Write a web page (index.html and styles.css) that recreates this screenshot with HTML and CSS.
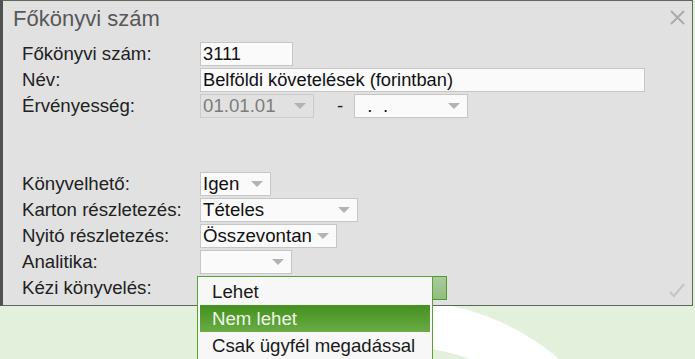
FILE: index.html
```html
<!DOCTYPE html>
<html lang="hu">
<head>
    <meta charset="UTF-8">
    <meta name="viewport" content="width=device-width, initial-scale=1.0">
    <title>Főkönyvi szám</title>
    <link rel="stylesheet" href="styles.css">
</head>
<body>
    <div class="dialog">
        <h1 class="dialog-title">Főkönyvi szám</h1>
        <button class="close-btn" title="Bezár">
            <svg width="15" height="15" viewBox="0 0 15 15"><path d="M1 1 L14 14 M14 1 L1 14" stroke="#ababab" stroke-width="2" fill="none"/></svg>
        </button>

        <form class="form-grid">
            <label>Főkönyvi szám:</label>
            <div><input class="field w-code" type="text" value="3111"></div>

            <label>Név:</label>
            <div><input class="field w-name" type="text" value="Belföldi követelések (forintban)"></div>

            <label>Érvényesség:</label>
            <div class="date-range">
                <div class="select w-date disabled"><span>01.01.01</span><i class="arrow"></i></div>
                <span class="dash">-</span>
                <div class="select w-date"><span>&nbsp;&nbsp;.&nbsp;&nbsp;.</span><i class="arrow"></i></div>
            </div>

            <div class="spacer"></div>

            <label>Könyvelhető:</label>
            <div><div class="select w-igen"><span>Igen</span><i class="arrow"></i></div></div>

            <label>Karton részletezés:</label>
            <div><div class="select w-karton"><span>Tételes</span><i class="arrow"></i></div></div>

            <label>Nyitó részletezés:</label>
            <div><div class="select w-nyito"><span>Összevontan</span><i class="arrow"></i></div></div>

            <label>Analitika:</label>
            <div><div class="select w-anal"><span></span><i class="arrow"></i></div></div>

            <label>Kézi könyvelés:</label>
            <div>
                <div class="select w-kezi open">
                    <span></span>
                    <ul class="dropdown">
                        <li>Lehet</li>
                        <li class="active">Nem lehet</li>
                        <li>Csak ügyfél megadással</li>
                    </ul>
                </div>
            </div>
        </form>

        <span class="ok-mark">
            <svg width="17" height="16" viewBox="0 0 17 16"><path d="M2 10 L6 14 L16 2" stroke="#c4c4c4" stroke-width="2" fill="none"/></svg>
        </span>
    </div>
</body>
</html>
```

FILE: styles.css
```css
html, body {
    margin: 0;
    padding: 0;
}

body {
    min-height: 100vh;
    font-family: 'Liberation Sans', Arial, sans-serif;
    color: #222;
    background:
        radial-gradient(circle at 400px 546px, transparent 199px, #ffffff 200px, #ffffff 245px, transparent 246px),
        #e3f0dc;
}

.dialog {
    position: relative;
    width: 689px;
    background-color: #e1e1e1;
    border: 1px solid #5d6659;
    border-left: 3px solid #505050;
    padding: 5px 0 5px 0;
}

.dialog-title {
    margin: 0 0 10px 10px;
    font-size: 22px;
    font-weight: normal;
    line-height: 26px;
    color: #585858;
}

.close-btn {
    position: absolute;
    top: 9px;
    right: 7px;
    padding: 0;
    border: none;
    background: none;
    line-height: 0;
    cursor: pointer;
}

.ok-mark {
    position: absolute;
    right: 7px;
    bottom: 7px;
    line-height: 0;
}

.form-grid {
    display: grid;
    grid-template-columns: 178px 1fr;
    grid-auto-rows: 24px;
    row-gap: 2px;
    margin: 0;
    padding-left: 19px;
    font-size: 18.67px;
}

.form-grid label {
    display: flex;
    align-items: center;
    color: #222;
}

.form-grid > div {
    display: flex;
    align-items: center;
}

.spacer {
    grid-column: 1 / 3;
    grid-row: span 2;
}

.field {
    box-sizing: border-box;
    height: 24px;
    padding: 0 2px;
    border: 1px solid #c6c6c6;
    background-color: #fafafa;
    font-family: inherit;
    font-size: 18.3px;
    color: #111;
    outline: none;
}

.w-code { width: 93px; }
.w-name { width: 445px; }

.select {
    position: relative;
    box-sizing: border-box;
    height: 24px;
    display: flex;
    align-items: center;
    justify-content: space-between;
    padding: 0 7px 0 2px;
    border: 1px solid #c6c6c6;
    background-color: #fafafa;
    color: #111;
    white-space: nowrap;
}

.select.disabled {
    background-color: #e1e1e1;
    border-color: #cbcbcb;
    color: #7c7c7c;
}

.arrow {
    width: 0;
    height: 0;
    border-left: 6px solid transparent;
    border-right: 6px solid transparent;
    border-top: 6px solid #b3b3b3;
}

.w-date { width: 114px; }
.w-igen { width: 71px; }
.w-karton { width: 158px; }
.w-nyito { width: 137px; }
.w-anal { width: 92px; }
.w-kezi { width: 247px; }

.dash {
    box-sizing: border-box;
    width: 40px;
    padding-left: 23px;
    color: #222;
}

.select.open {
    border-color: #4f9a2c;
    background: linear-gradient(#a9cb9b, #93bd80);
}

.dropdown {
    position: absolute;
    top: -1px;
    left: -4px;
    width: 236px;
    box-sizing: border-box;
    margin: 0;
    padding: 1px 2px 1px 2px;
    list-style: none;
    background-color: #f7f7f7;
    border: 1px solid #5ea032;
    z-index: 2;
}

.dropdown li {
    height: 27px;
    line-height: 27px;
    padding-left: 12px;
    color: #1a1a1a;
}

.dropdown li.active {
    background: linear-gradient(#43901f, #6aac45);
    color: #eef7e8;
}
```
